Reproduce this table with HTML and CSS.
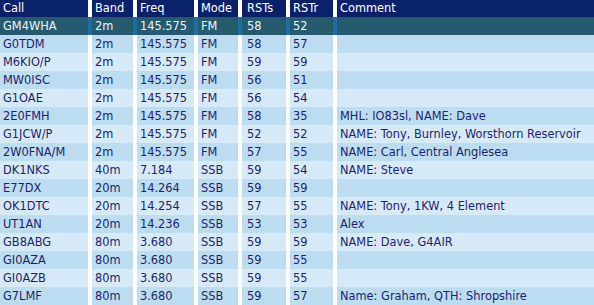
FILE: index.html
```html
<!DOCTYPE html>
<html>
<head>
<meta charset="utf-8">
<link rel="stylesheet" href="styles.css">
</head>
<body>
<table class="log">
<thead>
<tr class="head"><th class="c-call">Call</th><th class="c-band">Band</th><th class="c-freq">Freq</th><th class="c-mode">Mode</th><th class="c-rsts">RSTs</th><th class="c-rstr">RSTr</th><th class="c-comment">Comment</th></tr>
</thead>
<tbody>
<tr class="sel"><td>GM4WHA</td><td>2m</td><td>145.575</td><td>FM</td><td>58</td><td>52</td><td></td></tr>
<tr class="odd"><td>G0TDM</td><td>2m</td><td>145.575</td><td>FM</td><td>58</td><td>57</td><td></td></tr>
<tr class="even"><td>M6KIO/P</td><td>2m</td><td>145.575</td><td>FM</td><td>59</td><td>59</td><td></td></tr>
<tr class="odd"><td>MW0ISC</td><td>2m</td><td>145.575</td><td>FM</td><td>56</td><td>51</td><td></td></tr>
<tr class="even"><td>G1OAE</td><td>2m</td><td>145.575</td><td>FM</td><td>56</td><td>54</td><td></td></tr>
<tr class="odd"><td>2E0FMH</td><td>2m</td><td>145.575</td><td>FM</td><td>58</td><td>35</td><td>MHL: IO83sl, NAME: Dave</td></tr>
<tr class="even"><td>G1JCW/P</td><td>2m</td><td>145.575</td><td>FM</td><td>52</td><td>52</td><td>NAME: Tony, Burnley, Worsthorn Reservoir</td></tr>
<tr class="odd"><td>2W0FNA/M</td><td>2m</td><td>145.575</td><td>FM</td><td>57</td><td>55</td><td>NAME: Carl, Central Anglesea</td></tr>
<tr class="even"><td>DK1NKS</td><td>40m</td><td>7.184</td><td>SSB</td><td>59</td><td>54</td><td>NAME: Steve</td></tr>
<tr class="odd"><td>E77DX</td><td>20m</td><td>14.264</td><td>SSB</td><td>59</td><td>59</td><td></td></tr>
<tr class="even"><td>OK1DTC</td><td>20m</td><td>14.254</td><td>SSB</td><td>57</td><td>55</td><td>NAME: Tony, 1KW, 4 Element</td></tr>
<tr class="odd"><td>UT1AN</td><td>20m</td><td>14.236</td><td>SSB</td><td>53</td><td>53</td><td>Alex</td></tr>
<tr class="even"><td>GB8ABG</td><td>80m</td><td>3.680</td><td>SSB</td><td>59</td><td>59</td><td>NAME: Dave, G4AIR</td></tr>
<tr class="odd"><td>GI0AZA</td><td>80m</td><td>3.680</td><td>SSB</td><td>59</td><td>55</td><td></td></tr>
<tr class="even"><td>GI0AZB</td><td>80m</td><td>3.680</td><td>SSB</td><td>59</td><td>55</td><td></td></tr>
<tr class="odd"><td>G7LMF</td><td>80m</td><td>3.680</td><td>SSB</td><td>59</td><td>57</td><td>Name: Graham, QTH: Shropshire</td></tr>
</tbody>
</table>
</body>
</html>
```
FILE: styles.css
```css
html, body {
  margin: 0;
  padding: 0;
  background: #ffffff;
}
.log {
  width: 594px;
  border-collapse: collapse;
  table-layout: fixed;
  font-family: "DejaVu Sans", Verdana, sans-serif;
  font-size: 11.4px;
  color: #1f1f70;
}
.log th, .log td {
  padding: 0 0 0 3px;
  text-align: left;
  white-space: nowrap;
  overflow: hidden;
  border-left: 4px solid #ffffff;
  height: 18px;
  line-height: 18px;
  box-sizing: border-box;
}
.log th:first-child, .log td:first-child {
  border-left: 0;
}
.log th {
  font-weight: normal;
  color: #ffffff;
  background: #0a2068;
  height: 17px;
  line-height: 17px;
}
.c-call { width: 90px; }
.c-band { width: 45px; }
.c-freq { width: 61px; }
.c-mode { width: 44px; }
.c-rsts { width: 48px; }
.c-rstr { width: 47px; }
.c-comment { width: auto; }
.log td:nth-child(5), .log th:nth-child(5) { padding-left: 5px; }
.sel td {
  background: #255b6e;
  color: #eef3f6;
  border-left-color: #1e6ea6;
}
.sel td:first-child { border-left: 0; }
.odd td { background: #bddcf0; }
.even td { background: #d7e9f6; }
```
